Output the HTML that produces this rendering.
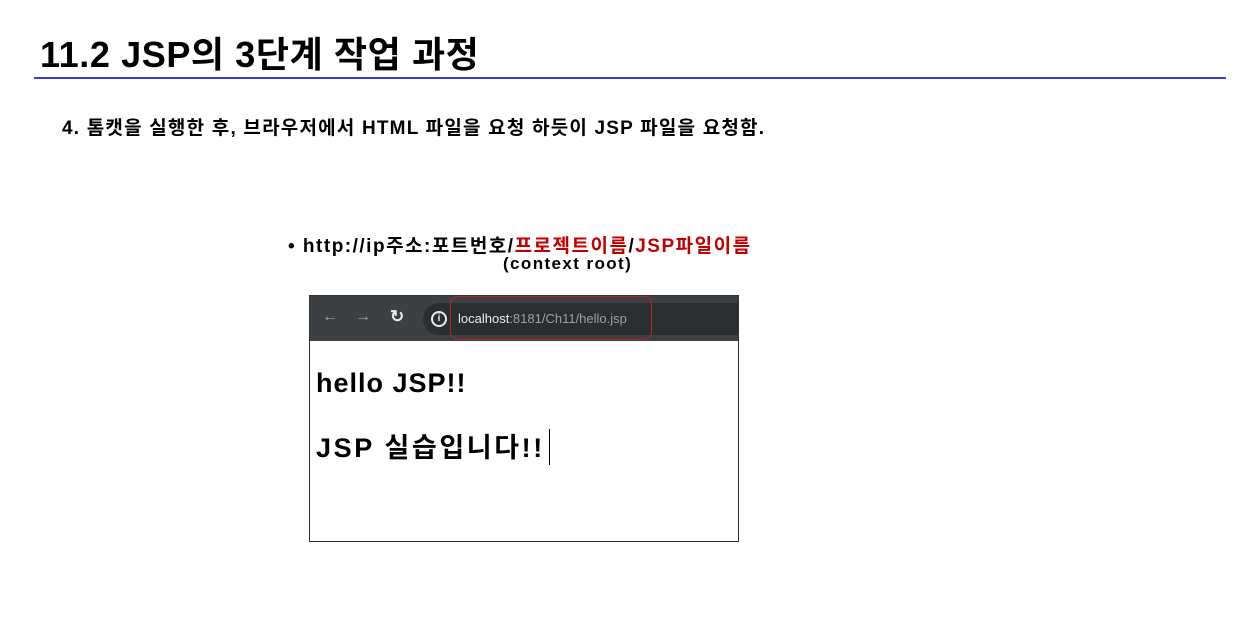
<!DOCTYPE html>
<html><head><meta charset="utf-8"><style>
body{margin:0;width:1254px;height:628px;background:#fff;position:relative;overflow:hidden;font-family:"Liberation Sans","Noto Sans CJK KR",sans-serif;color:#000}
.a{position:absolute;white-space:nowrap}
</style></head><body>
<div class="a" style="left:40px;top:26px;font-size:36px;font-weight:bold;letter-spacing:0.6px">11.2 JSP의 3단계 작업 과정</div>
<div class="a" style="left:34px;top:77px;width:1192px;height:2px;background:#3b3bdc"></div>
<div class="a" style="left:62px;top:113px;font-size:19px;font-weight:bold;letter-spacing:1.2px">4. 톰캣을 실행한 후, 브라우저에서 HTML 파일을 요청 하듯이 JSP 파일을 요청함.</div>
<div class="a" style="left:288px;top:231px;font-size:19px;font-weight:bold;letter-spacing:1.5px">• http://ip주소:포트번호/<span style="color:#c00000">프로젝트이름</span>/<span style="color:#c00000">JSP파일이름</span></div>
<div class="a" style="left:503px;top:254px;font-size:17px;font-weight:bold;letter-spacing:1.4px">(context root)</div>
<div class="a" style="left:309px;top:295px;width:428px;height:245px;border:1px solid #333;background:#fff">
 <div style="position:absolute;left:0;top:0;right:0;height:45px;background:#3c4043"></div>
 <div class="a" style="left:12px;top:12px;color:#9aa0a6;font-size:16px">←</div>
 <div class="a" style="left:45px;top:12px;color:#9aa0a6;font-size:16px">→</div>
 <div class="a" style="left:80px;top:11px;color:#e8eaed;font-size:17px;font-weight:bold">↻</div>
 <div style="position:absolute;left:113px;top:7px;right:0;height:32px;background:#2b2e31;border-radius:16px 0 0 16px"></div>
 <div class="a" style="left:121px;top:15px;width:12px;height:12px;border:2px solid #e8eaed;border-radius:50%;font-size:10px;color:#e8eaed;text-align:center;line-height:12px;font-weight:bold">i</div>
 <div class="a" style="left:140px;top:0px;width:200px;height:42px;border:1px solid #b22;border-radius:8px"></div>
 <div class="a" style="left:148px;top:15px;font-size:13px;color:#9aa0a6"><span style="color:#e8eaed">localhost</span>:8181/Ch11/hello.jsp</div>
 <div class="a" style="left:6px;top:72px;font-size:27px;font-weight:bold;letter-spacing:1px">hello JSP!!</div>
 <div class="a" style="left:6px;top:130px;font-size:27px;font-weight:bold;letter-spacing:2.6px">JSP 실습입니다!!</div>
 <div class="a" style="left:239px;top:133px;width:1px;height:36px;background:#000"></div>
</div>
</body></html>
